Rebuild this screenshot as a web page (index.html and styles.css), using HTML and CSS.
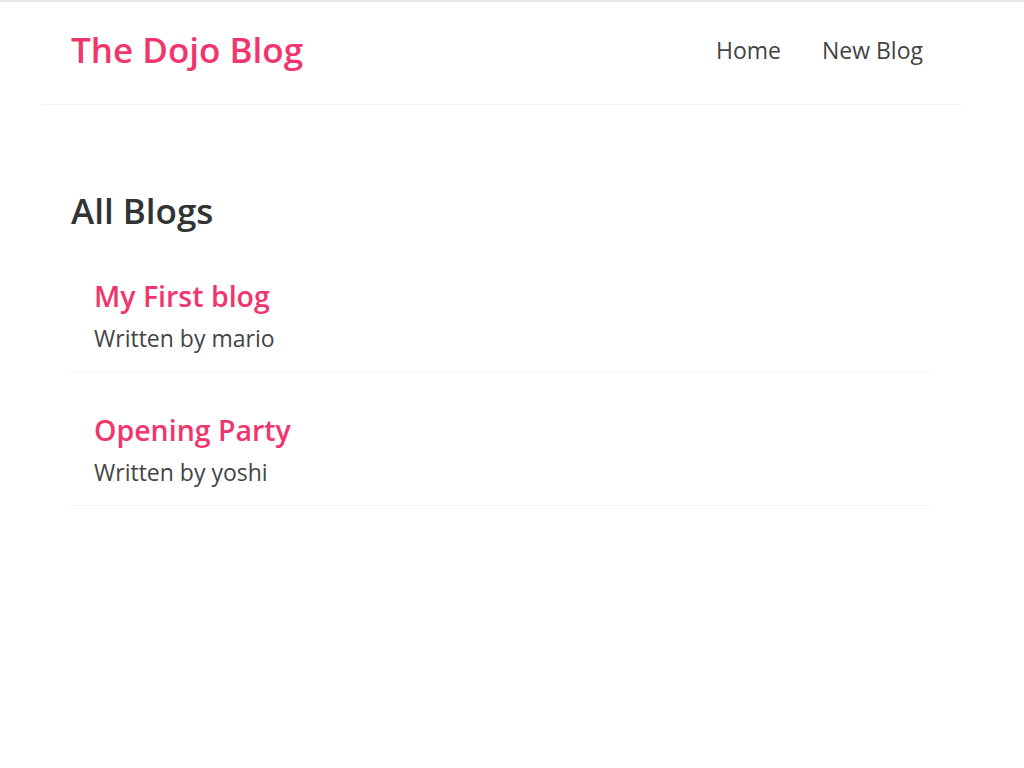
FILE: index.html
```html
<!DOCTYPE html>
<html lang="en">
<head>
<meta charset="utf-8">
<title>The Dojo Blog</title>
<link rel="stylesheet" href="styles.css">
</head>
<body>
<div class="app">
  <nav class="navbar">
    <h1 class="brand">The Dojo Blog</h1>
    <div class="links">
      <a href="#">Home</a>
      <a href="#">New Blog</a>
    </div>
  </nav>
  <main class="content">
    <h2 class="list-title">All Blogs</h2>
    <div class="blog-preview">
      <h3 class="blog-title">My First blog</h3>
      <p class="blog-author">Written by mario</p>
    </div>
    <div class="blog-preview">
      <h3 class="blog-title">Opening Party</h3>
      <p class="blog-author">Written by yoshi</p>
    </div>
  </main>
</div>
</body>
</html>
```

FILE: styles.css
```css
* { box-sizing: border-box; }
body {
  margin: 0;
  border-top: 2px solid #e6e6e6;
  background: #fff;
  color: #333;
  font-family: "Open Sans", "Noto Sans", sans-serif;
}
.app { width: 1003px; }
.navbar {
  width: 919px;
  height: 103px;
  margin: 0 auto;
  padding: 0 29px 7px;
  display: flex;
  align-items: center;
  border-bottom: 1px solid #f2f2f2;
}
.brand {
  margin: 0;
  font-size: 35px;
  line-height: 44px;
  font-weight: 600;
  color: #f1356d;
}
.links { margin-left: auto; display: flex; }
.links a {
  margin-left: 23px;
  padding: 0 9px;
  font-size: 23px;
  color: #444;
  text-decoration: none;
}
.content {
  width: 919px;
  margin: 57px auto 0;
  padding: 29px;
}
.list-title {
  margin: 0 0 33px;
  font-size: 35px;
  line-height: 40px;
  font-weight: 600;
  color: #333;
}
.blog-preview {
  padding: 14px 23px 18px;
  margin: 26px 0;
  border-bottom: 1px solid #f6f6f6;
}
.blog-title {
  margin: 0 0 10px;
  font-size: 28.5px;
  line-height: 36px;
  font-weight: 600;
  color: #f1356d;
}
.blog-author {
  margin: 0;
  font-size: 23px;
  line-height: 29px;
  color: #444;
}
```
